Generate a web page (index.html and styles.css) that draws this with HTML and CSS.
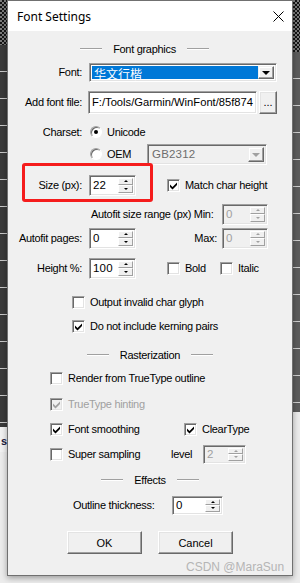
FILE: index.html
```html
<!DOCTYPE html>
<html>
<head>
<meta charset="utf-8">
<link rel="stylesheet" href="styles.css">
</head>
<body>
<div class="screen">
  <div class="side side-l">
    <div class="chk chk-l"></div>
    <div class="stripe stripe-l"></div>
    <div class="peek"><span>s</span></div>
    <div class="pale"></div>
  </div>
  <div class="center">
    <div class="window">
      <div class="titlebar">
        <span class="title">Font Settings</span>
        <svg class="close" width="11" height="11" viewBox="0 0 11 11"><path d="M0.5 0.5L10.5 10.5M10.5 0.5L0.5 10.5" stroke="#000" stroke-width="1" fill="none"/></svg>
      </div>
      <div class="client">
        <div class="row sep sep-first"><i></i><span>Font graphics</span><i></i></div>

        <div class="row mt3">
          <span class="lbl">Font:</span>
          <div class="combo font-combo"><span class="sel">华文行楷</span><span class="dd"><b class="tri"></b></span></div>
        </div>

        <div class="row mt10">
          <span class="lbl">Add font file:</span>
          <div class="field path">F:/Tools/Garmin/WinFont/85f874</div>
          <div class="btn dots">...</div>
        </div>

        <div class="row mt10">
          <span class="lbl">Charset:</span>
          <span class="radio on"></span><span class="rtext">Unicode</span>
        </div>

        <div class="row mt2">
          <span class="lbl"></span>
          <span class="radio"></span><span class="rtext oemtext">OEM</span>
          <div class="combo dis oem"><span class="ctext">GB2312</span><span class="dd"><b class="tri gray"></b></span></div>
        </div>

        <div class="row mt11">
          <span class="lbl">Size (px):</span>
          <div class="spin sp47 ml7"><span class="val">22</span><span class="btns"><i class="up"></i><i class="dn"></i></span></div>
          <span class="cbg ml31"><span class="cb"><svg class="tick" width="7" height="8" viewBox="0 0 7 8"><path d="M0 2.5L2.5 5L7 0.5V3L2.5 7.5L0 5Z"/></svg></span><span class="ctx">Match char height</span></span>
        </div>

        <div class="row mt9">
          <span class="autofit">Autofit size range (px) Min:</span>
          <div class="spin sp46 dis"><span class="val">0</span><span class="btns"><i class="up"></i><i class="dn"></i></span></div>
        </div>

        <div class="row mt4">
          <span class="lbl">Autofit pages:</span>
          <div class="spin sp47 ml7"><span class="val">0</span><span class="btns"><i class="up"></i><i class="dn"></i></span></div>
          <span class="maxlbl">Max:</span>
          <div class="spin sp46 dis ml5"><span class="val">0</span><span class="btns"><i class="up"></i><i class="dn"></i></span></div>
        </div>

        <div class="row mt10">
          <span class="lbl">Height %:</span>
          <div class="spin sp47 ml7"><span class="val">100</span><span class="btns"><i class="up"></i><i class="dn"></i></span></div>
          <span class="cbg ml31 boldg"><span class="cb"></span><span class="ctx">Bold</span></span>
          <span class="cbg"><span class="cb"></span><span class="ctx">Italic</span></span>
        </div>

        <div class="row mt14 in64">
          <span class="cbg"><span class="cb"></span><span class="ctx">Output invalid char glyph</span></span>
        </div>

        <div class="row mt4 in64">
          <span class="cbg"><span class="cb"><svg class="tick" width="7" height="8" viewBox="0 0 7 8"><path d="M0 2.5L2.5 5L7 0.5V3L2.5 7.5L0 5Z"/></svg></span><span class="ctx">Do not include kerning pairs</span></span>
        </div>

        <div class="row sep mt9"><i></i><span>Rasterization</span><i></i></div>

        <div class="row mt3 in42">
          <span class="cbg"><span class="cb"></span><span class="ctx">Render from TrueType outline</span></span>
        </div>

        <div class="row mt6 in42">
          <span class="cbg dim"><span class="cb dis"><svg class="tick" width="7" height="8" viewBox="0 0 7 8"><path d="M0 2.5L2.5 5L7 0.5V3L2.5 7.5L0 5Z"/></svg></span><span class="ctx">TrueType hinting</span></span>
        </div>

        <div class="row mt5 in42">
          <span class="cbg smoothg"><span class="cb"><svg class="tick" width="7" height="8" viewBox="0 0 7 8"><path d="M0 2.5L2.5 5L7 0.5V3L2.5 7.5L0 5Z"/></svg></span><span class="ctx">Font smoothing</span></span>
          <span class="cbg"><span class="cb"><svg class="tick" width="7" height="8" viewBox="0 0 7 8"><path d="M0 2.5L2.5 5L7 0.5V3L2.5 7.5L0 5Z"/></svg></span><span class="ctx">ClearType</span></span>
        </div>

        <div class="row mt5 in42">
          <span class="cbg superg"><span class="cb"></span><span class="ctx">Super sampling</span></span>
          <span class="levellbl">level</span>
          <div class="spin sp43 dis short"><span class="val">2</span><span class="btns"><i class="up"></i><i class="dn"></i></span></div>
        </div>

        <div class="row sep mt6"><i></i><span>Effects</span><i></i></div>

        <div class="row mt5">
          <span class="outlbl">Outline thickness:</span>
          <div class="spin sp51 short"><span class="val">0</span><span class="btns"><i class="up"></i><i class="dn"></i></span></div>
        </div>

        <div class="row mt16 btnrow">
          <div class="btn push">OK</div>
          <div class="btn push">Cancel</div>
        </div>

        <div class="highlight"></div>
        <div class="watermark">CSDN @MaraSun</div>
      </div>
    </div>
    <div class="below"></div>
  </div>
  <div class="side side-r">
    <div class="chk chk-r"></div>
    <div class="stripe stripe-r"></div>
    <div class="pale"></div>
  </div>
</div>
</body>
</html>
```

FILE: styles.css
```css
* { box-sizing: border-box; }
html, body { margin: 0; padding: 0; }
body {
  width: 300px;
  height: 583px;
  overflow: hidden;
  background: #ececec;
  font-family: "Liberation Sans", Arial, sans-serif;
  font-size: 11px;
  color: #000;
}
.screen { display: flex; height: 583px; }

/* ---------- background strips ---------- */
.side { width: 7px; flex: none; display: flex; flex-direction: column; }
.chk {
  background: repeating-conic-gradient(#141414 0 25%, #7a7a7a 0 50%) 0 0 / 4px 4px;
}
.chk-l { height: 45px; }
.chk-r { height: 52px; }
.stripe-l {
  height: 382px;
  background: repeating-linear-gradient(to bottom, #3a3a3a 0 26px, #c9c9c9 26px 27px);
}
.stripe-r {
  height: 360px;
  background: repeating-linear-gradient(to bottom, #5c5c5c 0 26px, #cfcfcf 26px 27px);
}
.peek {
  height: 25px;
  background: #f2f2f2;
  font-size: 11px;
  font-weight: bold;
  color: #1a1a40;
  padding-top: 8px;
  padding-left: 1px;
}
.pale { flex: 1; background: #ececec; }

/* ---------- window ---------- */
.center { width: 286px; flex: none; display: flex; flex-direction: column; }
.window {
  height: 576px;
  flex: none;
  border: 1px solid #707070;
  background: #f0f0f0;
  box-shadow: 0 2px 6px rgba(0,0,0,0.35);
  display: flex;
  flex-direction: column;
  position: relative;
  z-index: 1;
}
.below { flex: 1; background: #ececec; }
.titlebar {
  height: 30px;
  flex: none;
  background: #fff;
  display: flex;
  align-items: center;
  justify-content: space-between;
  padding: 0 8px 0 9px;
}
.title {
  font-family: "Noto Sans", "Open Sans", sans-serif;
  font-size: 12px;
  color: #000;
}
.close { display: block; }

.client {
  flex: 1;
  position: relative;
  padding-top: 8px;
  display: flex;
  flex-direction: column;
}
.row {
  height: 20px;
  flex: none;
  display: flex;
  align-items: center;
  white-space: nowrap;
  letter-spacing: -0.3px;
}
.mt2 { margin-top: 2px; }
.mt3 { margin-top: 3px; }
.mt4 { margin-top: 4px; }
.mt5 { margin-top: 5px; }
.mt6 { margin-top: 6px; }
.mt9 { margin-top: 9px; }
.mt10 { margin-top: 10px; }
.mt11 { margin-top: 11px; }
.mt14 { margin-top: 14px; }
.mt16 { margin-top: 16px; }
.ml5 { margin-left: 5px; }
.ml7 { margin-left: 7px; }
.ml31 { margin-left: 31px; }
.in64 { padding-left: 64px; }
.in42 { padding-left: 42px; }

/* section separators */
.sep { justify-content: center; gap: 11px; }
.sep-first { padding-right: 11px; }
.sep i {
  width: 22px;
  height: 2px;
  border-top: 1px solid #a0a0a0;
  border-bottom: 1px solid #fff;
}

.lbl { width: 74px; text-align: right; flex: none; }

/* sunken fields */
.field, .combo, .spin {
  border: 1px solid;
  border-color: #a0a0a0 #fff #fff #a0a0a0;
  box-shadow: inset 1px 1px #696969, inset -1px -1px #e3e3e3;
  background: #fff;
  flex: none;
}
.field {
  width: 169px;
  height: 23px;
  margin-left: 6px;
  padding: 0 0 0 3px;
  display: flex;
  align-items: center;
  letter-spacing: 0;
  font-size: 11.2px;
}
.btn {
  border: 1px solid;
  border-color: #fff #696969 #696969 #fff;
  box-shadow: inset -1px -1px #a0a0a0, inset 1px 1px #e3e3e3;
  background: #f0f0f0;
  display: flex;
  align-items: center;
  justify-content: center;
  flex: none;
}
.dots { width: 18px; height: 23px; margin-left: 2px; letter-spacing: 0; }

.combo {
  display: flex;
  padding: 2px;
  height: 19px;
}
.font-combo { width: 188px; margin-left: 7px; }
.sel {
  flex: 1;
  background: #0078d7;
  color: #fff;
  font-family: "Noto Sans CJK SC", sans-serif;
  font-size: 12px;
  line-height: 15px;
  padding-left: 2px;
  letter-spacing: 0;
}
.dd {
  width: 16px;
  flex: none;
  border: 1px solid;
  border-color: #f0f0f0 #696969 #696969 #f0f0f0;
  box-shadow: inset -1px -1px #a0a0a0, inset 1px 1px #fff;
  background: #f0f0f0;
  display: flex;
  align-items: center;
  justify-content: center;
}
.tri {
  width: 0; height: 0;
  border-left: 4px solid transparent;
  border-right: 4px solid transparent;
  border-top: 4px solid #000;
  margin-top: 1px;
}
.tri.gray { border-top-color: #a0a0a0; }
.combo.dis { background: #f0f0f0; }
.oem { width: 120px; height: 21px; }
.ctext {
  flex: 1;
  color: #6d6d6d;
  font-size: 11.5px;
  letter-spacing: 0.2px;
  line-height: 15px;
  padding-left: 2px;
}
.oemtext { width: 40px; }

/* radio */
.radio {
  width: 12px; height: 12px;
  border-radius: 50%;
  border: 1px solid;
  border-color: #a0a0a0 #fff #fff #a0a0a0;
  box-shadow: inset 1px 1px #696969;
  background: #fff;
  margin-left: 8px;
  flex: none;
  display: flex;
  align-items: center;
  justify-content: center;
}
.radio.on::after {
  content: "";
  width: 4px; height: 4px;
  border-radius: 50%;
  background: #000;
}
.rtext { margin-left: 5px; flex: none; }

/* spin */
.spin {
  display: flex;
  height: 21px;
  padding: 2px 2px 2px 3px;
}
.spin.short { height: 19px; }
.sp47 { width: 47px; }
.sp46 { width: 46px; }
.sp43 { width: 43px; }
.sp51 { width: 51px; }
.val {
  flex: 1;
  font-size: 11.5px;
  letter-spacing: 0.2px;
  line-height: 15px;
}
.spin.short .val { line-height: 13px; }
.btns { width: 15px; flex: none; display: flex; flex-direction: column; }
.btns i {
  flex: 1;
  border: 1px solid;
  border-color: #fff #a0a0a0 #a0a0a0 #fff;
  background: #f0f0f0;
  display: flex;
  align-items: center;
  justify-content: center;
}
.btns i::after {
  content: "";
  width: 0; height: 0;
  border-left: 2px solid transparent;
  border-right: 2px solid transparent;
}
.btns .up::after { border-bottom: 2px solid #000; }
.btns .dn::after { border-top: 2px solid #000; }
.spin.dis { background: #f0f0f0; }
.spin.dis .val { color: #a0a0a0; }
.spin.dis .btns .up::after { border-bottom-color: #a0a0a0; }
.spin.dis .btns .dn::after { border-top-color: #a0a0a0; }

/* checkboxes */
.cbg { display: flex; align-items: center; flex: none; }
.cb {
  width: 13px; height: 13px;
  border: 1px solid;
  border-color: #a0a0a0 #fff #fff #a0a0a0;
  box-shadow: inset 1px 1px #696969, inset -1px -1px #e3e3e3;
  background: #fff;
  flex: none;
  position: relative;
}
.tick {
  position: absolute;
  left: 2px;
  top: 2px;
  display: block;
  fill: #000;
}
.cb.dis { background: #f0f0f0; }
.cb.dis .tick { fill: #a0a0a0; }
.ctx { margin-left: 5px; }
.dim .ctx { color: #a0a0a0; }
.boldg { width: 53px; }
.smoothg { width: 134px; }
.superg { width: 121px; }
.levellbl { width: 32px; flex: none; }

.autofit { margin-left: 83px; width: 131px; flex: none; }
.maxlbl { width: 81px; text-align: right; flex: none; }
.outlbl { margin-left: 65px; width: 99px; flex: none; }

.btnrow { padding-left: 59px; gap: 16px; height: 23px; }
.push { width: 75px; height: 23px; letter-spacing: 0; }

/* overlays */
.highlight {
  position: absolute;
  left: 14px;
  top: 132px;
  width: 131px;
  height: 39px;
  border: 3px solid #f51c1c;
  border-radius: 3px;
}
.watermark {
  position: absolute;
  left: 178px;
  top: 529px;
  font-size: 12px;
  color: #b5b5b5;
  letter-spacing: 0;
}
```
